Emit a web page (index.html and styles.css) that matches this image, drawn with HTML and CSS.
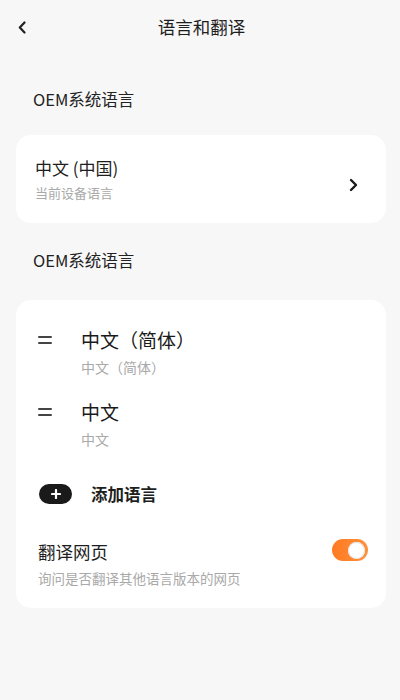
FILE: index.html
```html
<!DOCTYPE html>
<html lang="zh-CN">
<head>
<meta charset="utf-8">
<link rel="stylesheet" href="styles.css">
</head>
<body>
<div class="page">
  <header class="header">
    <span class="back">
      <svg width="8" height="13" viewBox="0 0 8 13"><polyline points="6.5,1.5 1.8,6.5 6.5,11.5" fill="none" stroke="#222" stroke-width="2.2" stroke-linecap="round" stroke-linejoin="round"/></svg>
    </span>
    <h1 class="title">语言和翻译</h1>
  </header>

  <div class="label first">OEM系统语言</div>

  <div class="card card-system">
    <div class="sys-text">
      <div class="sys-title">中文 (中国)</div>
      <div class="sys-sub">当前设备语言</div>
    </div>
    <span class="chev">
      <svg width="9" height="14" viewBox="0 0 9 14"><polyline points="2,2 7,7 2,12" fill="none" stroke="#1a1a1a" stroke-width="2.4" stroke-linecap="round" stroke-linejoin="round"/></svg>
    </span>
  </div>

  <div class="label second">OEM系统语言</div>

  <div class="card card-langs">
    <div class="lang-item">
      <span class="drag"><i></i><i></i></span>
      <div class="lang-text">
        <div class="lang-title">中文（简体）</div>
        <div class="lang-sub">中文（简体）</div>
      </div>
    </div>
    <div class="lang-item second-item">
      <span class="drag"><i></i><i></i></span>
      <div class="lang-text">
        <div class="lang-title">中文</div>
        <div class="lang-sub">中文</div>
      </div>
    </div>
    <div class="add-row">
      <span class="add-pill">
        <svg width="10" height="10" viewBox="0 0 10 10"><path d="M5 1v8M1 5h8" stroke="#fff" stroke-width="2.2" stroke-linecap="round"/></svg>
      </span>
      <span class="add-text">添加语言</span>
    </div>
    <div class="translate-row">
      <div class="tr-text">
        <div class="tr-title">翻译网页</div>
        <div class="tr-sub">询问是否翻译其他语言版本的网页</div>
      </div>
      <span class="toggle"><span class="knob"></span></span>
    </div>
  </div>
</div>
</body>
</html>
```

FILE: styles.css
```css
* { box-sizing: border-box; }
html, body {
  margin: 0;
  padding: 0;
  background: #f7f7f7;
}
body {
  font-family: "Noto Sans CJK SC", "Noto Sans", sans-serif;
  color: #222;
  width: 400px;
  height: 700px;
  overflow: hidden;
}
.page {
  display: flex;
  flex-direction: column;
}
.header {
  position: relative;
  height: 54px;
  display: flex;
  align-items: center;
  justify-content: center;
}
.back {
  position: absolute;
  left: 18px;
  top: 21px;
  display: flex;
}
.title {
  margin: 0;
  font-size: 17.5px;
  font-weight: 400;
  color: #1e1e1e;
  line-height: 24px;
  padding-left: 3px;
}
.label {
  height: 24px;
  line-height: 24px;
  font-size: 16.5px;
  color: #222;
  padding-left: 33px;
}
.label.first { margin: 33px 0 24px; }
.label.second { margin: 25px 0 28px; }

.card {
  background: #fff;
  border-radius: 15px;
  margin: 0 14px 0 16px;
}
.card-system {
  height: 88px;
  display: flex;
  align-items: center;
  padding: 0 28px 0 19px;
}
.sys-text {
  flex: 1;
  display: flex;
  flex-direction: column;
  gap: 5px;
  margin-top: 1px;
}
.sys-title {
  font-size: 17px;
  line-height: 22px;
  color: #1e1e1e;
}
.sys-sub {
  font-size: 13px;
  line-height: 18px;
  color: #a9a9a9;
}
.chev {
  display: flex;
  margin-top: 12px;
}

.card-langs {
  padding: 27px 18px 20px 22px;
  display: flex;
  flex-direction: column;
}
.lang-item {
  display: flex;
  align-items: flex-start;
}
.lang-item.second-item { margin-top: 22px; }
.drag {
  width: 14px;
  margin-right: 29px;
  margin-top: 9px;
  display: flex;
  flex-direction: column;
  gap: 4px;
}
.drag i {
  display: block;
  height: 2px;
  background: #444;
  border-radius: 1px;
}
.lang-text {
  display: flex;
  flex-direction: column;
  gap: 4px;
}
.lang-title {
  font-size: 19px;
  line-height: 26px;
  color: #1a1a1a;
}
.lang-sub {
  font-size: 14px;
  line-height: 20px;
  color: #a9a9a9;
}
.add-row {
  margin-top: 33px;
  display: flex;
  align-items: center;
  height: 24px;
}
.add-pill {
  width: 33px;
  height: 20px;
  border-radius: 10px;
  background: #1a1a1a;
  margin-left: 1px;
  margin-right: 19px;
  display: flex;
  align-items: center;
  justify-content: center;
}
.add-text {
  font-size: 16.5px;
  font-weight: 700;
  color: #1e1e1e;
}
.translate-row {
  margin-top: 34px;
  display: flex;
  align-items: flex-start;
}
.tr-text {
  flex: 1;
  display: flex;
  flex-direction: column;
  gap: 4px;
}
.tr-title {
  font-size: 17.5px;
  line-height: 24px;
  color: #1e1e1e;
}
.tr-sub {
  font-size: 13.5px;
  line-height: 20px;
  color: #a9a9a9;
}
.toggle {
  position: relative;
  width: 36px;
  height: 22px;
  border-radius: 11px;
  background: linear-gradient(90deg, #ff7a22, #ff913c);
  margin-top: -1px;
}
.knob {
  position: absolute;
  right: 3px;
  top: 2.5px;
  width: 17px;
  height: 17px;
  border-radius: 50%;
  background: #fff;
  box-shadow: inset 0 0 0 1px #e2e2e2;
}
```
